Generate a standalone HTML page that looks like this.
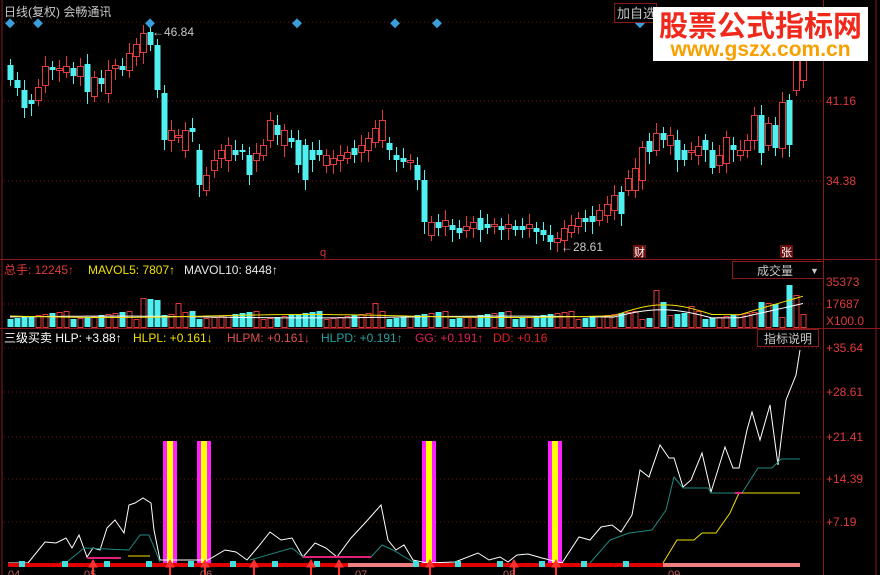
<!DOCTYPE html>
<html><head><meta charset="utf-8"><style>
body{margin:0;background:#000;width:880px;height:575px;overflow:hidden;font-family:"Liberation Sans","Noto Sans CJK SC",sans-serif}
svg{position:absolute;left:0;top:0}
.t{font-size:12px}
#wm{position:absolute;left:653px;top:7px;width:215px;height:54px;background:#fff;text-align:center;white-space:nowrap;overflow:hidden}
#wm .a{color:#f0291c;font:bold 29px "Noto Sans CJK SC",sans-serif;line-height:32px;margin-top:1px}
#wm .b{color:#f7a000;font:bold 21px "Liberation Sans",sans-serif;line-height:20px}
</style></head><body>
<svg id="s" width="880" height="575" xmlns="http://www.w3.org/2000/svg">
<g stroke="#7a1010" stroke-width="1" stroke-dasharray="1,3">
<line x1="4" y1="22" x2="823" y2="22"/><line x1="4" y1="101" x2="823" y2="101"/><line x1="4" y1="181" x2="823" y2="181"/>
<line x1="4" y1="348" x2="823" y2="348"/><line x1="4" y1="392" x2="823" y2="392"/><line x1="4" y1="437" x2="823" y2="437"/><line x1="4" y1="479" x2="823" y2="479"/><line x1="4" y1="522" x2="823" y2="522"/>
<line x1="4" y1="304" x2="823" y2="304"/>
</g>
<g stroke="#8a1a1a"><line x1="2" y1="0" x2="2" y2="575"/><line x1="823.5" y1="0" x2="823.5" y2="575"/><line x1="0" y1="259.5" x2="880" y2="259.5"/><line x1="0" y1="328.5" x2="880" y2="328.5"/><line x1="876" y1="0" x2="876" y2="575"/></g>
<g id="cand"></g><g id="vol"></g>
<g fill="#3a9fd8" id="dia"></g>
<text x="4" y="16" fill="#c8c8c8" class="t" font-size="13">日线(复权) 会畅通讯</text>
<rect x="614.5" y="3.5" width="42" height="19" fill="#000" stroke="#8a1a1a"/><text x="617" y="18" fill="#c8c8c8" font-size="13">加自选</text>
<text x="152" y="36" fill="#c8c8c8" class="t">←46.84</text>
<text x="561" y="251" fill="#c8c8c8" class="t">←28.61</text>
<text x="320" y="256" fill="#e03030" font-size="11">q</text>
<rect x="633" y="245" width="13" height="13" fill="#6a1010"/><text x="634" y="256" fill="#fff" font-size="11">财</text>
<rect x="780" y="245" width="13" height="13" fill="#6a1010"/><text x="781" y="256" fill="#fff" font-size="11">张</text>
<g fill="#e03a3a" class="t"><text x="826" y="105">41.16</text><text x="826" y="185">34.38</text>
<text x="826" y="286">35373</text><text x="826" y="308">17687</text><text x="826" y="325">X100.0</text>
<text x="826" y="352">+35.64</text><text x="826" y="396">+28.61</text><text x="826" y="441">+21.41</text><text x="826" y="483">+14.39</text><text x="826" y="526">+7.19</text></g>
<text y="274" class="t"><tspan x="4" fill="#e03a3a">总手: 12245↑</tspan><tspan x="88" fill="#f0e000">MAVOL5: 7807↑</tspan><tspan x="184" fill="#e8e8e8">MAVOL10: 8448↑</tspan></text>
<rect x="732.5" y="261.5" width="91" height="17" fill="#000" stroke="#8a1a1a"/><text x="757" y="275" fill="#c8c8c8" class="t">成交量</text><text x="810" y="274" fill="#c8c8c8" font-size="9">▼</text>
<text y="342" class="t"><tspan x="4" fill="#fff">三级买卖 HLP: +3.88↑</tspan><tspan x="133" fill="#f0e000">HLPL: +0.161↓</tspan><tspan x="227" fill="#e05050">HLPM: +0.161↓</tspan><tspan x="321" fill="#2aa0a0">HLPD: +0.191↑</tspan><tspan x="415" fill="#e0205a">GG: +0.191↑</tspan><tspan x="493" fill="#e02020">DD: +0.16</tspan></text>
<rect x="757.5" y="329.5" width="61" height="17" fill="#000" stroke="#8a1a1a"/><text x="764" y="343" fill="#c8c8c8" class="t">指标说明</text>
<g id="bars"></g>
<polyline fill="none" stroke="#fff" stroke-width="1" points="8,563 28,563 45,542 56,543 66,538 72,548 79,535 87,557 93,548 100,550 107,528 115,520 124,533 129,505 135,503 143,498 151,503 154,530 160,560 208,560 225,550 236,552 247,560 258,547 270,532 281,540 292,538 303,557 315,543 326,548 337,557 351,538 365,523 381,505 388,540 396,550 404,545 413,560 427,563 455,562 478,553 489,560 500,557 508,562 517,555 528,554 542,558 562,563 579,537 590,540 601,527 612,525 621,532 632,515 640,470 649,477 660,445 669,458 674,458 683,487 691,480 702,453 711,492 725,447 733,468 739,468 747,430 752,412 760,440 770,405 778,465 786,400 796,375 800,350"/>
<polyline fill="none" stroke="#1f8a80" points="60,563 67,562 84,548 129,550 140,535 149,535 160,562"/>
<polyline fill="none" stroke="#1f8a80" points="250,560 292,548 303,557 371,557 382,545 393,550 413,562"/>
<polyline fill="none" stroke="#1f8a80" points="590,563 610,540 629,533 652,530 666,510 674,477 683,488 708,488 711,493 742,493 758,468 772,468 781,459 800,459"/>
<polyline fill="none" stroke="#f0e000" points="663,563 677,540 694,540 702,533 716,533 730,513 739,493 800,493"/>
<polyline fill="none" stroke="#f0e000" points="128,556 150,556"/>
<g stroke="#e0207a" stroke-width="2"><line x1="87" y1="558" x2="121" y2="558"/><line x1="303" y1="557" x2="371" y2="557"/><line x1="735" y1="493" x2="742" y2="493"/></g>
<line x1="8" y1="565" x2="800" y2="565" stroke="#e00000" stroke-width="4"/>
<g stroke="#f08080" stroke-width="4"><line x1="348" y1="565" x2="413" y2="565"/><line x1="663" y1="565" x2="800" y2="565"/></g>
<g id="sq" fill="#40e0e0"></g><g id="ar" fill="#ff3030" stroke="#ff3030"></g>
<g fill="#c06060" font-size="11"><text x="8" y="578">04</text><text x="84" y="578">05</text><text x="200" y="578">06</text><text x="355" y="578">07</text><text x="503" y="578">08</text><text x="668" y="578">09</text></g>
</svg>
<div id="wm"><div class="a">股票公式指标网</div><div class="b">www.gszx.com.cn</div></div>
<script>
var N="http://www.w3.org/2000/svg";
function el(g,t,a){var e=document.createElementNS(N,t);for(var k in a)e.setAttribute(k,a[k]);document.getElementById(g).appendChild(e);}
var C=[[65,80,'c'],[80,88,'c'],[90,108,'c'],[100,104,'c'],[87,100,'r'],[66,85,'r'],[67,70,'c'],[68,70,'r'],[66,72,'r'],[68,76,'c'],[66,76,'r'],[64,92,'c'],[77,96,'r'],[78,84,'c'],[70,93,'r'],[65,68,'r'],[66,70,'c'],[53,70,'r'],[44,56,'r'],[33,52,'r'],[32,45,'c'],[45,90,'c'],[93,140,'c'],[130,140,'r'],[135,137,'r'],[130,150,'r'],[128,132,'c'],[150,185,'c'],[175,190,'r'],[160,170,'r'],[150,158,'r'],[145,160,'r'],[150,155,'c'],[150,152,'c'],[155,175,'c'],[153,160,'r'],[145,155,'r'],[120,140,'r'],[125,135,'c'],[130,145,'r'],[138,142,'c'],[140,165,'c'],[145,180,'c'],[150,160,'c'],[150,155,'c'],[155,165,'r'],[158,164,'r'],[155,160,'r'],[152,158,'r'],[148,155,'c'],[145,152,'r'],[138,150,'r'],[128,142,'r'],[120,140,'r'],[143,150,'c'],[155,160,'c'],[158,162,'c'],[160,162,'r'],[165,180,'c'],[180,222,'c'],[222,235,'r'],[222,228,'c'],[220,226,'r'],[225,230,'c'],[228,233,'c'],[226,230,'r'],[222,228,'r'],[218,230,'c'],[224,228,'c'],[224,226,'r'],[226,230,'c'],[224,228,'r'],[226,230,'c'],[226,230,'c'],[224,228,'r'],[228,232,'c'],[230,235,'c'],[235,242,'c'],[238,242,'r'],[228,240,'r'],[225,232,'r'],[218,226,'r'],[218,222,'c'],[216,222,'c'],[210,220,'r'],[204,215,'r'],[195,210,'r'],[192,214,'c'],[178,190,'r'],[168,190,'r'],[147,180,'r'],[141,152,'c'],[133,150,'r'],[133,140,'c'],[135,145,'r'],[140,160,'c'],[150,160,'c'],[150,152,'r'],[146,155,'r'],[140,150,'c'],[150,168,'c'],[155,165,'r'],[137,163,'r'],[145,150,'c'],[150,155,'r'],[140,150,'r'],[115,140,'r'],[115,153,'c'],[123,145,'r'],[125,148,'c'],[102,148,'r'],[100,145,'c'],[60,90,'r'],[55,80,'r']];
var dx=(803-10)/(C.length-1);
C.forEach(function(c,i){var x=Math.round(10+i*dx)+0.5,col=c[2]=='c'?'#50f0f0':'#e03a3a';
el('cand','line',{x1:x,x2:x,y1:c[0]-6-(i%3)*2,y2:c[1]+6+(i%4)*2,stroke:col});
if(c[2]=='c')el('cand','rect',{x:x-3,y:c[0],width:6,height:Math.max(1,c[1]-c[0]),fill:col});
else el('cand','rect',{x:x-3,y:c[0]+0.5,width:6,height:Math.max(1,c[1]-c[0]),fill:'#000',stroke:col});
var h=8+((i*37)%9);if([19,20,21,24,52,93,97,107,108,109,111].indexOf(i)>=0)h=20+((i*13)%14);if(i==92)h=37;if(i==111)h=42;if(i==112)h=32;
if(c[2]=='c')el('vol','rect',{x:x-3,y:327-h,width:6,height:h,fill:'#50f0f0'});else el('vol','rect',{x:x-2.5,y:327.5-h,width:5,height:h,fill:'none',stroke:'#e03a3a'});
});
var p1="",p2="";C.forEach(function(c,i){var x=10+i*dx;var b=Math.sin(i/9)*1.5;
var y1=316+b,y2=317-b*0.6;
if(i>=86&&i<=100){var k=Math.sin((i-86)/14*Math.PI);y1-=k*10;y2-=k*8;}
if(i>=104){y1-=(i-104)*2.2;y2-=(i-104)*1.5;}
p1+=x+","+y1+" ";p2+=x+","+y2+" ";});
el('vol','polyline',{points:p2,fill:'none',stroke:'#fff'});el('vol','polyline',{points:p1,fill:'none',stroke:'#f0e000'});
[10,38,150,297,395,437,640].forEach(function(x){el('dia','rect',{x:x-4,y:20,width:7,height:7,transform:'rotate(45 '+x+' 24)'})});
[[163,177],[197,211],[422,436],[548,562]].forEach(function(b){el('bars','rect',{x:b[0],y:441,width:b[1]-b[0],height:123,fill:'#ff20ff'});el('bars','rect',{x:b[0]+4,y:441,width:6,height:123,fill:'#ffff00'});});
[22,65,107,149,191,233,275,317,416,458,500,542,584,626].forEach(function(x){el('sq','rect',{x:x-3,y:561,width:6,height:6})});
[93,170,205,254,311,339,430,514,556].forEach(function(x){el('ar','polygon',{points:(x-4)+",567 "+x+",560 "+(x+4)+",567"});el('ar','line',{x1:x,x2:x,y1:565,y2:575,'stroke-width':2})});
</script>
</body></html>
